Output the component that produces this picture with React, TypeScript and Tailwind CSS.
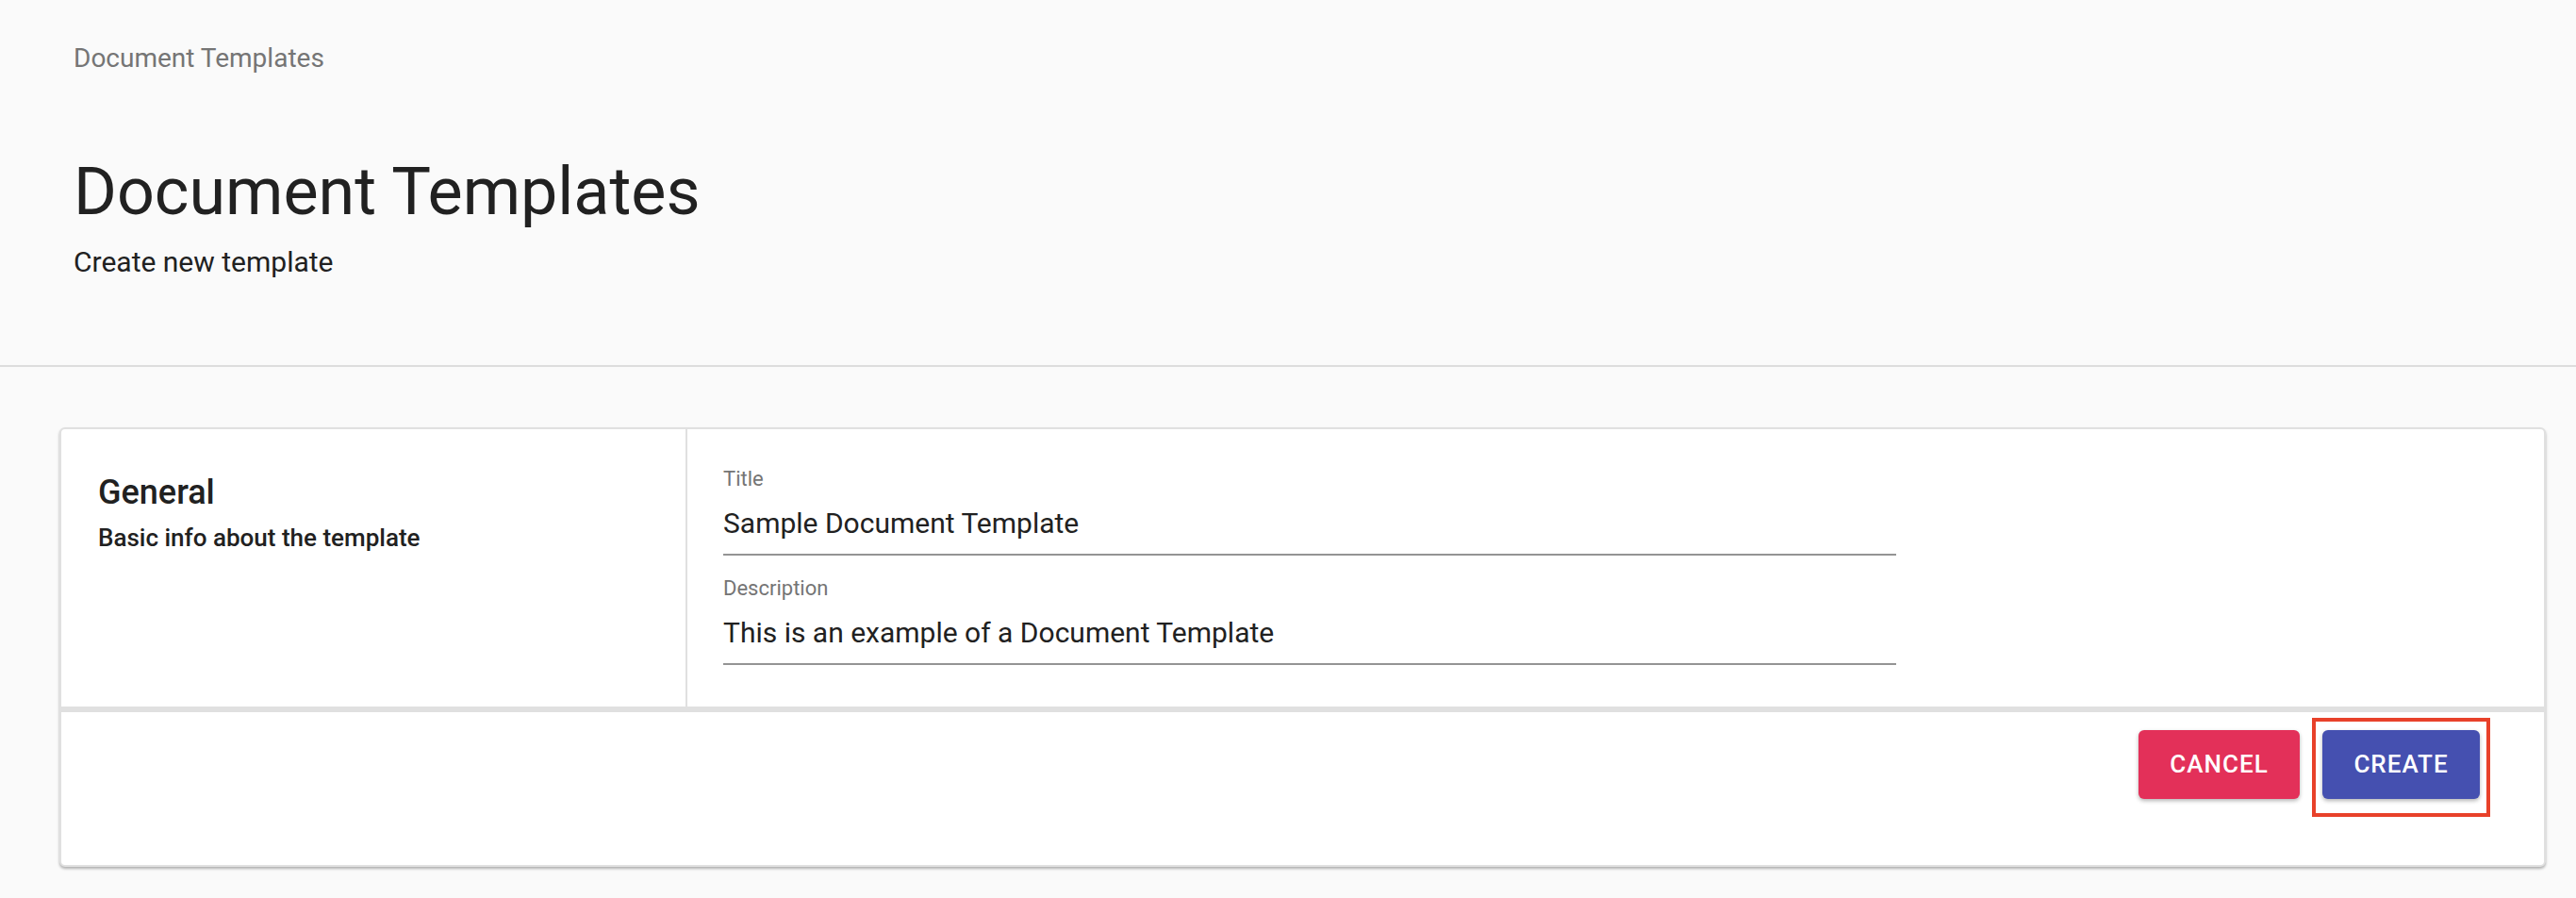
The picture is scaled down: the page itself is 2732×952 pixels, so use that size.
import React from 'react';

const Field: React.FC<{ label: string; value: string }> = ({ label, value }) => (
  <div className="w-[1244px]">
    <div className="text-[22px] leading-[26px] text-[#757575]">{label}</div>
    <div className="mt-[16px] pb-[14px] text-[30px] leading-[36px] text-[#212121] border-b-2 border-[#949494]">
      {value}
    </div>
  </div>
);

export default function App() {
  return (
    <div className="min-h-[952px] bg-[#fafafa] font-[Roboto]">
      <header className="px-[78px] pt-[44px] pb-[91px] border-b-2 border-[#dddddd]">
        <div className="text-[28px] leading-[36px] text-[#757575]">Document Templates</div>
        <h1 className="mt-[83px] text-[70px] leading-[80px] text-[#212121]">Document Templates</h1>
        <div className="mt-[17px] text-[30px] leading-[36px] text-[#212121]">Create new template</div>
      </header>

      <div className="px-[63px] pt-[64px]">
        <div className="w-[2637px] bg-white border-2 border-[#e0e0e0] rounded-[6px] shadow-[0_2px_3px_rgba(0,0,0,0.3)]">
          <div className="flex h-[300px] border-b-[6px] border-[#e0e0e0]">
            <div className="w-[664px] border-r-2 border-[#e0e0e0] px-[39px] pt-[45px]">
              <div className="text-[36px] leading-[44px] font-medium text-[#212121]">General</div>
              <div className="mt-[10px] text-[26px] leading-[32px] font-medium text-[#212121]">
                Basic info about the template
              </div>
            </div>
            <div className="flex flex-col gap-[22px] pl-[38px] pt-[40px]">
              <Field label="Title" value="Sample Document Template" />
              <Field label="Description" value="This is an example of a Document Template" />
            </div>
          </div>
          <div className="flex justify-end items-start gap-[24px] h-[162px] pr-[68px] pt-[12px]">
            <button className="mt-[7px] w-[171px] h-[73px] rounded-[6px] bg-[#e33059] text-white text-[26px] font-medium tracking-[1px] shadow-[0_2px_4px_rgba(0,0,0,0.3)]">
              CANCEL
            </button>
            <div className="-mt-[6px] -mx-[11px] px-[7px] pt-[9px] pb-[15px] border-4 border-[#e8412a]">
              <button className="w-[167px] h-[73px] rounded-[6px] bg-[#4550b0] text-white text-[26px] font-medium tracking-[1px] shadow-[0_2px_4px_rgba(0,0,0,0.3)]">
                CREATE
              </button>
            </div>
          </div>
        </div>
      </div>
    </div>
  );
}
